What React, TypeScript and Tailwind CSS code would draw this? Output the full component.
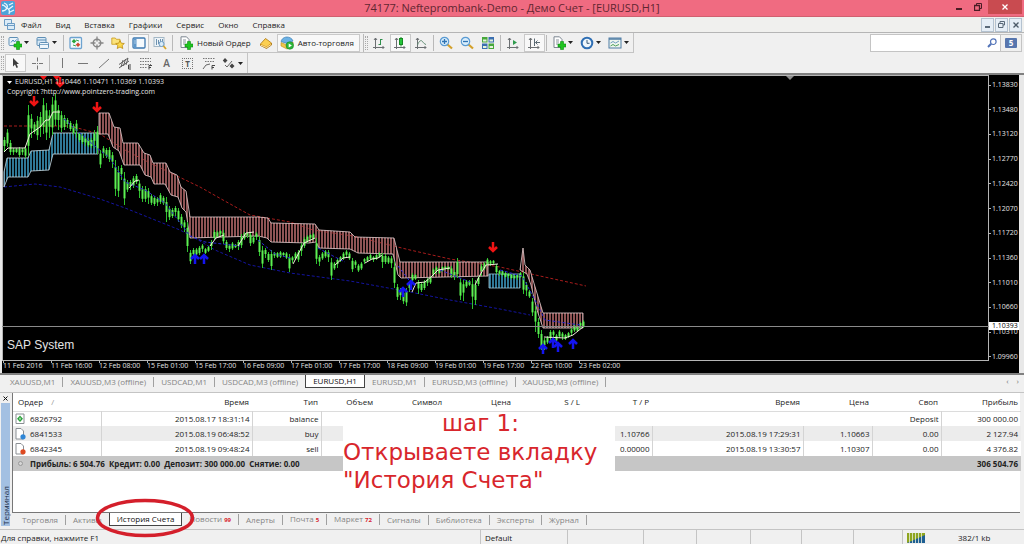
import type { ReactNode } from 'react';

const FONT = "font-['Open_Sans','Noto_Sans',sans-serif]";

/* ---------- icons ---------- */

const Icon = ({ children }: { children: ReactNode }) => (
  <svg viewBox="0 0 14 14" className="size-[14px] shrink-0" fill="none" strokeWidth="1">
    {children}
  </svg>
);

const Plus = () => (
  <path d="M8.500 5.500h3v2.500H14v3h-2.500v2.500h-3V11H6V8h2.500z" fill="#1fc41f" stroke="#0b8a12" strokeWidth=".6" />
);

const Axes = () => (
  <path d="M3.500 2v11M1 11.500h11M2 4l1.500-2L5 4M10.500 10l1.500 1.500-1.500 1.500" stroke="#6b6f72" />
);

const NewChartIcon = () => (
  <Icon>
    <rect x="1" y="1.500" width="9" height="8" rx="1" fill="#eaf4fb" stroke="#5f8fb5" />
    <path d="M3 6.500 5 4l1.500 2L8.500 3.500" stroke="#4b8ac0" />
    <Plus />
  </Icon>
);

const ProfilesIcon = () => (
  <Icon>
    <rect x="1" y="1.500" width="9" height="8" rx="1" fill="#d7e9f7" stroke="#5f8fb5" />
    <path d="M1 4h9" stroke="#5f8fb5" />
    <rect x="3.500" y="6.500" width="9" height="6" rx="1" fill="#eef6fc" stroke="#5f8fb5" />
    <path d="M4 8.500h8" stroke="#7fa9ca" />
  </Icon>
);

const MarketWatchIcon = () => (
  <Icon>
    <rect x="1" y="1.500" width="11.500" height="11" rx="1" fill="#f4f9fd" stroke="#6da3d0" strokeWidth="1.300" />
    <path d="m5 3 2.300 2.300L5 7.600 2.700 5.300z" fill="#28a43a" />
    <path d="m9 6.500 2.300 2.300L9 11.100 6.700 8.800z" fill="#d0452c" />
    <path d="M7 4l3 1M4 9l3 1" stroke="#39a652" />
  </Icon>
);

const CrosshairWindowIcon = () => (
  <Icon>
    <circle cx="7" cy="7" r="3.800" stroke="#868686" strokeWidth="1.400" />
    <path d="M7 .5v5M7 8.500v5M.5 7h5M8.500 7h5" stroke="#868686" strokeWidth="1.300" />
  </Icon>
);

const FolderStarIcon = () => (
  <Icon>
    <path d="M.8 2h3.500l1 1.300H9v5H.8z" fill="#fbe37b" stroke="#c89a1c" strokeWidth=".8" />
    <path d="m9 4.500 1.300 2.700 3 .3-2.200 2 .7 3L9 11l-2.800 1.500.7-3-2.200-2 3-.3z" fill="#fbd94b" stroke="#bd8b12" strokeWidth=".8" />
  </Icon>
);

const TerminalIcon = () => (
  <Icon>
    <rect x="1" y="2" width="12" height="10" rx="1" fill="#f6fafd" stroke="#3d78b0" strokeWidth="1.300" />
    <path d="M1.500 2.500h3v9h-3z" fill="#5d97ca" />
    <path d="M2.500 5h1M2.500 7h1" stroke="#fff" />
  </Icon>
);

const TesterIcon = () => (
  <Icon>
    <rect x="1" y="1.500" width="10" height="9" fill="#eef4f8" stroke="#a4b8c6" />
    <path d="M3.500 3v6M5.500 4v4M7.500 3v5M9.500 3v3" stroke="#6d92b0" />
    <circle cx="8.500" cy="8" r="2.500" fill="#d9ecf9" stroke="#6f9dc4" />
    <path d="m10.500 10 2.500 3" stroke="#d7a52b" strokeWidth="1.800" />
  </Icon>
);

const NewOrderIcon = () => (
  <Icon>
    <path d="M2 .8h5.500L10 3.500v8H2z" fill="#fff" stroke="#7c8690" />
    <path d="M4 4h3M4 6h3M4 8h2" stroke="#8a949c" />
    <Plus />
  </Icon>
);

const BookIcon = () => (
  <Icon>
    <path d="M1.500 8 6.500 2.500 12.500 7v2L7.500 12.500 1.500 9.500z" fill="#d99a22" stroke="#a87512" strokeWidth=".8" />
    <path d="M2 8 6.500 3 12 7 7.500 10.500z" fill="#fbcf52" />
    <path d="M2 9.300 7.500 11.500l4.500-3" stroke="#fff3c4" strokeWidth=".8" />
  </Icon>
);

const AutoTradeIcon = () => (
  <Icon>
    <path d="M1 6.500 7 9l6-3v4l-6 3-6-3z" fill="#f0c64c" stroke="#b98c1c" strokeWidth=".6" />
    <path d="M1 5.500C2 2 5 1 7 1s5 1 6 4L7 7.500z" fill="#6cb2e4" stroke="#3a7db5" strokeWidth=".7" />
    <circle cx="9.800" cy="9.500" r="3.800" fill="#2db53a" stroke="#128022" strokeWidth=".5" />
    <path d="m8.700 7.500 3.200 2-3.200 2z" fill="#fff" />
  </Icon>
);

const BarChartIcon = () => (
  <Icon>
    <Axes />
    <path d="M8.500 3v6M6.500 8.500h2M8.500 3.500h2" stroke="#2f8f4b" />
  </Icon>
);

const CandleChartIcon = () => (
  <Icon>
    <Axes />
    <path d="M8 1v9.500" stroke="#168a24" />
    <rect x="6.500" y="2.500" width="3" height="6" fill="#25c63a" stroke="#168a24" />
  </Icon>
);

const LineChartIcon = () => (
  <Icon>
    <Axes />
    <path d="M3.500 9C5 5 7 3.500 8.500 5.500S10.500 8 12 8.500" stroke="#5d8a70" />
  </Icon>
);

const ZoomIcon = ({ plus }: { plus?: boolean }) => (
  <Icon>
    <path d="m8.500 8.500 4.500 4" stroke="#d3a02b" strokeWidth="2.200" />
    <circle cx="5.500" cy="5.500" r="4.200" fill="#d8edfb" stroke="#5b9bd2" strokeWidth="1.200" />
    <path d={plus ? 'M3 5.500h5M5.500 3v5' : 'M3 5.500h5'} stroke="#2f74b5" strokeWidth="1.300" />
  </Icon>
);

const TileIcon = () => (
  <Icon>
    <path d="M1 1h5.500v5.500H1zM7.500 7.500H13V13H7.500z" fill="#47a83b" />
    <path d="M7.500 1H13v5.500H7.500zM1 7.500h5.500V13H1z" fill="#3b6fb0" />
    <path d="M2 3.500h3.500v2H2zM8.500 3.500H12v2H8.500zM2 10h3.500v2H2zM8.500 10H12v2H8.500z" fill="#e6f3dc" />
  </Icon>
);

const AutoScrollIcon = () => (
  <Icon>
    <Axes />
    <path d="m7 4 4 2.500L7 9z" fill="#2f9b4d" />
  </Icon>
);

const ShiftIcon = () => (
  <Icon>
    <Axes />
    <path d="M7.500 2.500V10M13 6.500H8.500M10.500 4.500l-2 2 2 2" stroke="#5c6b74" />
  </Icon>
);

const ClockIcon = () => (
  <Icon>
    <circle cx="7" cy="7" r="5.300" fill="#eef6fc" stroke="#2f6fb4" strokeWidth="2" />
    <path d="M7 4v3.300h2.500" stroke="#395a78" />
  </Icon>
);

const TemplateIcon = () => (
  <Icon>
    <rect x="1" y="2" width="12" height="10" fill="#eef6ee" stroke="#4f7da5" />
    <path d="M1 3h12" stroke="#4f7da5" strokeWidth="1.500" />
    <path d="M2.500 7 5 5.500 7.500 7 11 5" stroke="#6f9dc0" />
    <path d="M2.500 10 5 8.500 7.500 10 11 8.500" stroke="#4da05c" />
  </Icon>
);

const CursorIcon = () => (
  <Icon>
    <path d="M4 2v8.500l2-2 1.500 3.500 1.500-.7L7.600 8H10z" fill="#3e3e3e" />
  </Icon>
);

const CrossIcon = () => (
  <Icon>
    <path d="M7.500 1.500v4M7.500 9.500v4M2 7.500h4M9 7.500h4" stroke="#777" />
    <path d="M7 7.500h1" stroke="#777" />
  </Icon>
);

const StrokeIcon = ({ d }: { d: string }) => (
  <Icon>
    <path d={d} stroke="#777" />
  </Icon>
);

const ChannelIcon = () => (
  <Icon>
    <path d="M1 8.500 10 2M1 12 11 5M3 11l2-7M5.500 10l2-7M8 9l2-7" stroke="#606060" />
    <path d="M13 9h-2.500v4H13M10.500 11H13" stroke="#444" />
  </Icon>
);

const FiboIcon = () => (
  <Icon>
    <path d="M1 2.500h11M1 5.500h11M1 8.500h11M1 11.500h7" stroke="#777" strokeDasharray="1.500 1" />
    <path d="M10 13.500V9.500h3M10 11.500h2" stroke="#444" />
  </Icon>
);

const FiboFanIcon = () => (
  <Icon>
    <path d="M1 2.500h12M3 5.500h10" stroke="#777" strokeDasharray="1.500 1" />
    <path d="M1 13l3-4 4-1" stroke="#666" />
    <path d="M10 13.500V9.500h3M10 11.500h2" stroke="#444" />
  </Icon>
);

const ArrowsIcon = () => (
  <Icon>
    <path d="m3 2 2.500 2.500L3 7 .8 4.500zM10 7.500l2.500 2.500-2.500 2.500-2.500-2.500z" fill="#444" />
    <path d="m3 9 2 2 5-6" stroke="#666" />
  </Icon>
);

/* ---------- toolbar pieces ---------- */

type ToolProps = { label: string; pressed?: boolean; menu?: boolean; children: ReactNode };

const Tool = ({ label, pressed, menu, children }: ToolProps) => (
  <button
    aria-label={label}
    className={`flex h-[18px] shrink-0 items-center border ${menu ? 'w-[28px] gap-[2px] pl-[2px]' : 'w-[21px] justify-center'} ${
      pressed ? 'border-[#c9c9c9] bg-[#f8f8f8]' : 'border-transparent'
    }`}
  >
    {children}
    {menu && (
      <svg viewBox="0 0 5 3" className="h-[3px] w-[5px]">
        <path d="M0 0h5L2.500 3z" fill="#222" />
      </svg>
    )}
  </button>
);

const Divider = () => (
  <span className="flex w-[4px] shrink-0 justify-center">
    <span className="h-[16px] w-px bg-[#b9b9b9]" />
  </span>
);

const Grip = () => <span className="mx-px h-[14px] w-[3px] shrink-0 border-x border-dotted border-[#a9a9a9]" />;

const MENU = ['Файл', 'Вид', 'Вставка', 'Графики', 'Сервис', 'Окно', 'Справка'];

const TitleBar = () => (
  <header className="relative flex h-[17px] items-start justify-between border-b border-[#d0606f] bg-[#f06b81]">
    <svg viewBox="0 0 14 14" className="mt-px ml-px size-[14px]">
      <rect width="14" height="14" rx="2" fill="#4ea3d8" />
      <path d="M1 4c3 0 3 2 5 3s3 3 2 6M3 2c3 1 4 3 3 5s-3 3-5 3M8 4l4-2M8 8l4-3M9 11l4-2" stroke="#e9f6fd" strokeWidth="1.300" fill="none" />
    </svg>
    <h1 className="absolute inset-x-0 top-0 text-center text-[11px] leading-[15px] text-[#5f2630]">
      74177: Nefteprombank-Demo - Демо Счет - [EURUSD,H1]
    </h1>
    <div className="relative mr-[2px] flex h-[14px]">
      <button aria-label="Свернуть" className="flex w-[18px] items-end justify-center pb-[4px]">
        <span className="h-[2px] w-[6px] bg-[#4a1c24]" />
      </button>
      <button aria-label="Восстановить" className="flex w-[20px] items-center justify-center">
        <svg viewBox="0 0 8 8" className="size-[8px]" fill="none" stroke="#4a1c24">
          <path d="M2.500 2V.5h5v5H6" />
          <path d="M.5 2.500h5v5h-5z" strokeWidth="1.300" />
        </svg>
      </button>
      <button aria-label="Закрыть" className="flex w-[34px] items-center justify-center bg-[#c94b50]">
        <svg viewBox="0 0 6 6" className="size-[6px]">
          <path d="m.5.5 5 5M5.500.5l-5 5" stroke="#fff" strokeWidth="1.300" />
        </svg>
      </button>
    </div>
  </header>
);

const mdiButton = 'flex h-[14px] w-[13px] items-center justify-center border border-[#b4c2d0] bg-[#e6eef6]';

const MenuBar = () => (
  <nav className="flex h-[16px] items-center justify-between border-b border-[#b5b5b5] bg-[#f0f0ee] pr-[2px]">
    <div className="flex items-center">
      <svg viewBox="0 0 11 11" className="mr-[-1px] ml-[4px] size-[11px]" fill="#dcecf7" stroke="#6c9cc4">
        <path d="M.5.5h7v6h-7z" />
        <path d="M3.500 4.500h7v6h-7zM3.500 6.500h7" />
      </svg>
      {MENU.map((item) => (
        <button key={item} className="px-[7px] text-[8px] leading-[12px] text-[#222]">
          {item}
        </button>
      ))}
    </div>
    <div className="flex gap-px">
      <button aria-label="Свернуть окно" className={mdiButton}>
        <span className="mt-[4px] h-[2px] w-[5px] bg-[#5b6a79]" />
      </button>
      <button aria-label="Восстановить окно" className={mdiButton}>
        <svg viewBox="0 0 7 7" className="size-[7px]" fill="none" stroke="#5b6a79">
          <path d="M2 2V.5h4.500V4H5M.5 2.500H5v4H.5z" />
        </svg>
      </button>
      <button aria-label="Закрыть окно" className={mdiButton}>
        <svg viewBox="0 0 6 6" className="size-[6px]" stroke="#4d5b69" strokeWidth="1.300">
          <path d="m.5.5 5 5M5.500.5l-5 5" />
        </svg>
      </button>
    </div>
  </nav>
);

const MainToolbar = () => (
  <div className="flex h-[20px] items-center justify-between bg-[#f0f0f0] pr-[2px]">
    <div className="flex h-[20px] items-center border-r border-b border-[#c4c4c4]">
      <Grip />
      <Tool label="Новый график" menu><NewChartIcon /></Tool>
      <Tool label="Профили" menu><ProfilesIcon /></Tool>
      <Divider />
      <Tool label="Обзор рынка"><MarketWatchIcon /></Tool>
      <Tool label="Окно данных"><CrosshairWindowIcon /></Tool>
      <Tool label="Навигатор"><FolderStarIcon /></Tool>
      <Tool label="Терминал" pressed><TerminalIcon /></Tool>
      <Tool label="Тестер стратегий"><TesterIcon /></Tool>
      <Divider />
      <button className="flex h-[18px] shrink-0 items-center gap-[4px] px-[5px] text-[8px] text-[#222]">
        <NewOrderIcon />
        Новый Ордер
      </button>
      <Tool label="MetaEditor"><BookIcon /></Tool>
      <button className="mr-[3px] flex h-[18px] shrink-0 items-center gap-[4px] border border-[#c9c9c9] bg-[#f8f8f8] pr-[5px] pl-[2px] text-[8px] text-[#222]">
        <AutoTradeIcon />
        Авто-торговля
      </button>
      <span className="h-[18px] w-px bg-[#b9b9b9]" />
      <Grip />
      <Tool label="Бары"><BarChartIcon /></Tool>
      <Tool label="Японские свечи" pressed><CandleChartIcon /></Tool>
      <Tool label="Линия"><LineChartIcon /></Tool>
      <Divider />
      <Tool label="Увеличить"><ZoomIcon plus /></Tool>
      <Tool label="Уменьшить"><ZoomIcon /></Tool>
      <Tool label="Мозаика"><TileIcon /></Tool>
      <Divider />
      <Tool label="Автопрокрутка"><AutoScrollIcon /></Tool>
      <Tool label="Сдвиг графика" pressed><ShiftIcon /></Tool>
      <Divider />
      <Tool label="Индикаторы" menu><NewOrderIcon /></Tool>
      <Tool label="Периоды" menu><ClockIcon /></Tool>
      <Tool label="Шаблоны" menu><TemplateIcon /></Tool>
    </div>
    <div className="flex h-[18px] border border-[#c4c4c4]">
      <label className="flex w-[129px] items-center bg-white pr-[3px]">
        <input type="search" aria-label="Поиск" className="min-w-0 flex-1 px-1 text-[8px] outline-none" />
        <svg viewBox="0 0 10 10" className="size-[10px]" fill="none" stroke="#5273b8">
          <circle cx="6.300" cy="3.700" r="2.800" strokeWidth="1.200" />
          <path d="M4.200 5.800 1 9" strokeWidth="2" />
        </svg>
      </label>
      <button aria-label="Сообщения" className="flex w-[21px] items-center justify-center border-l border-[#c4c4c4]">
        <span className="rounded-[1px] bg-[#5776ae] px-[4px] text-[8px] leading-[10px] font-bold text-white">5</span>
      </button>
    </div>
  </div>
);

const LineToolbar = () => (
  <div className="flex h-[20px] bg-[#f0f0f0]">
    <div className="flex items-center border-r border-[#c4c4c4]">
      <Grip />
      <Tool label="Курсор" pressed><CursorIcon /></Tool>
      <Tool label="Перекрестие"><CrossIcon /></Tool>
      <Divider />
      <Tool label="Вертикальная линия"><StrokeIcon d="M7.500 2v10" /></Tool>
      <Tool label="Горизонтальная линия"><StrokeIcon d="M2 7.500h10" /></Tool>
      <Tool label="Трендовая линия"><StrokeIcon d="M2 12 12 3" /></Tool>
      <Tool label="Канал"><ChannelIcon /></Tool>
      <Tool label="Фибоначчи"><FiboIcon /></Tool>
      <Tool label="Текст"><span className="text-[10px] leading-none font-semibold text-[#666]">A</span></Tool>
      <Tool label="Метка">
        <span className="border border-dotted border-[#777] px-[2px] text-[8px] leading-[9px] font-bold text-[#555]">T</span>
      </Tool>
      <Tool label="Веер Фибоначчи"><FiboFanIcon /></Tool>
      <Tool label="Стрелки" menu><ArrowsIcon /></Tool>
    </div>
  </div>
);

/* ---------- chart ---------- */

// [high, low] of each hourly candle, 3 units apart
const CANDLES = [
  [137, 152], [129, 147], [140, 155], [148, 155], [148, 153], [147, 157], [148, 155], [146, 158], [105, 156], [114, 138],
  [122, 134], [116, 140], [112, 137], [98, 134], [103, 140], [110, 138], [97, 135], [94, 126], [105, 130], [111, 132],
  [115, 130], [118, 128], [121, 131], [124, 135], [120, 138], [132, 142], [134, 144], [137, 146], [138, 147], [138, 148],
  [130, 148], [126, 154], [150, 168], [146, 158], [148, 158], [147, 162], [152, 168], [160, 196], [166, 197], [165, 180],
  [172, 205], [180, 192], [180, 190], [176, 188], [174, 184], [180, 198], [186, 202], [186, 202], [188, 204], [194, 205],
  [196, 206], [197, 206], [193, 204], [196, 205], [197, 222], [206, 220], [208, 218], [206, 216], [208, 222], [214, 228],
  [220, 232], [222, 252], [250, 264], [248, 258], [248, 256], [246, 255], [244, 252], [248, 254], [246, 252], [240, 250],
  [230, 240], [231, 238], [230, 236], [230, 244], [240, 250], [244, 252], [242, 250], [244, 248], [240, 250], [234, 248],
  [232, 240], [232, 238], [232, 246], [236, 244], [232, 240], [236, 256], [246, 268], [248, 258], [252, 262], [250, 270],
  [252, 258], [252, 258], [251, 258], [252, 257], [252, 259], [254, 272], [256, 263], [252, 260], [250, 262], [243, 256],
  [237, 248], [235, 243], [234, 240], [233, 240], [238, 264], [255, 266], [252, 260], [250, 258], [250, 262], [258, 280],
  [262, 270], [258, 268], [256, 262], [252, 260], [250, 258], [252, 260], [258, 272], [260, 268], [264, 272], [262, 270],
  [258, 264], [256, 262], [254, 260], [256, 262], [254, 260], [252, 258], [253, 268], [254, 264], [256, 264], [256, 268],
  [262, 288], [284, 300], [288, 300], [290, 304], [288, 306], [282, 292], [273, 282], [274, 280], [280, 294], [282, 292],
  [280, 290], [278, 286], [276, 284], [268, 276], [266, 274], [268, 274], [266, 272], [266, 270], [266, 270], [266, 278],
  [270, 280], [258, 278], [278, 300], [280, 301], [280, 288], [280, 286], [278, 309], [280, 305], [276, 286], [264, 276],
  [262, 270], [258, 266], [260, 266], [260, 264], [264, 274], [270, 276], [270, 276], [272, 278], [273, 278], [274, 279],
  [275, 279], [274, 280], [272, 278], [272, 294], [282, 296], [290, 298], [298, 316], [306, 332], [318, 338], [330, 350],
  [338, 350], [336, 344], [330, 340], [330, 338], [334, 342], [330, 338], [332, 340], [334, 340], [332, 338], [328, 336],
  [324, 332], [326, 332], [322, 328], [320, 328],
];

const BANDS = [
  { color: '#2f7896', edge: '#c9dde6', d: 'M4 172 7 158H28L31 151 49 150 53 133H98V154H53L49 170 31 171 28 177H8L4 187z' },
  {
    color: '#8f5455',
    edge: '#e6cfd0',
    d: 'M99 113h10l5 14 6 1 3 15h15l6 10 6 2 3 8h13l4 9 7 3 4 12 5 4 4 26h68l10 1 3 5 44 1 4 6 31 2 5 5 39 1 6 24h88v14l-87 2-3-3-5-21-35-1-8-4-31-1-3-6-7 1-38-1-4-4-9-2-68 2-4-26-4-4-4-11-7-2-6-11h-11l-3-7-6-2-5-10h-16l-5-14-6-4-5-13h-9z',
  },
  { color: '#2f7896', edge: '#9cc6d8', d: 'M489 274h31v14h-31z' },
  { color: '#8f5455', edge: '#e6cfd0', d: 'M520 270 523 248 525 265 530 270 536 290 543 313H583V328H543L537 310 531 285 527 274z' },
];

const AVERAGES = [
  'M4 152 8 148H25L30 134 40 127 46 120H49L53 112H60',
  'M129 188 135 181 139 180',
  'M210 246 216 238 224 235',
  'M238 246 246 233 254 232',
  'M293 264 304 243 315 238',
  'M335 265 343 258 350 257',
  'M365 263 372 259 378 258 382 255',
  'M412 292 416 283 425 282 432 276 438 270 450 268',
  'M475 285 480 275 486 265 498 264',
  'M544 337 565 338 573 335 583 327',
];

const SELL_ARROWS = [[34, 101], [60, 82], [97, 107], [493, 247]];
const BUY_ARROWS = [[195, 259], [204, 259], [403, 292], [411, 285], [543, 349], [553, 343], [558, 347], [573, 344]];

const PriceChart = () => (
  <svg viewBox="3 76 984 284" preserveAspectRatio="xMinYMin meet" className="block h-[284px] w-full" fill="none">
    <defs>
      {BANDS.map((band, i) => (
        <pattern key={i} id={`band${i}`} width="3" height="10" patternUnits="userSpaceOnUse">
          <path d="M1 0v10" stroke={band.color} strokeWidth="2" />
        </pattern>
      ))}
    </defs>
    <path
      d="M4 126H70L100 134 125 150 150 163 200 187 223 200 250 215 290 222 313 230 353 236 410 250 450 259 500 267 540 276 586 286"
      stroke="#a81c1c"
      strokeDasharray="3 2"
    />
    <path
      d="M4 187 35 184 60 187 100 199 125 208 150 218 180 230 195 238 215 250 250 265 290 273 350 281 410 292 450 300 500 309 530 315"
      stroke="#1414a0"
      strokeDasharray="3 2"
    />
    {BANDS.map((band, i) => (
      <path key={i} d={band.d} fill={`url(#band${i})`} stroke={band.edge} strokeWidth=".8" />
    ))}
    {CANDLES.map(([high, low], i) => {
      const x = 4 + i * 3;
      const size = low - high;
      return (
        <g key={i}>
          <path d={`M${x + 0.5} ${high}V${low}`} stroke="#2fc02f" />
          <rect x={x - 0.5} y={high + size * 0.2} width="2" height={size * (i % 3 ? 0.6 : 0.4)} fill="#5cf052" />
        </g>
      );
    })}
    <path
      d="M64 119 80 133 97 148 110 158 125 182 145 190 165 203 190 236 205 242 240 246M258 240 275 254 290 258M318 248 333 256 345 262M398 266 412 284M440 270 470 282M500 270 522 276 535 300 545 320 580 325"
      stroke="#2727d0"
      strokeDasharray="3 2"
    />
    {AVERAGES.map((d) => (
      <path key={d} d={d} stroke="#f1efdc" />
    ))}
    <path d="M40 76h7l-3.500 4zM53 76h7l-3.500 4z" fill="#f01414" />
    {SELL_ARROWS.map(([x, y]) => (
      <path key={x} d={`M${x} ${y - 5}v9M${x - 4} ${y}l4 4 4-4`} stroke="#f01414" strokeWidth="2.500" />
    ))}
    {BUY_ARROWS.map(([x, y]) => (
      <path key={x} d={`M${x} ${y + 5}v-9M${x - 4} ${y}l4-4 4 4`} stroke="#1414f0" strokeWidth="2.500" />
    ))}
    <path d="M786 76h8l-4 4z" fill="#8c8c8c" />
  </svg>
);

const PRICES = [
  '1.13830', '1.13480', '1.13120', '1.12770', '1.12420', '1.12070', '1.11720', '1.11360', '1.11010', '1.10660', '1.10310', '1.09960',
];

const TIMES = [
  '11 Feb 2016', '11 Feb 16:00', '12 Feb 08:00', '15 Feb 01:00', '15 Feb 17:00', '16 Feb 09:00', '17 Feb 01:00',
  '17 Feb 17:00', '18 Feb 09:00', '19 Feb 01:00', '19 Feb 17:00', '22 Feb 10:00', '23 Feb 02:00',
];

const ChartWindow = () => (
  <section className="flex border-t-2 border-b-2 border-[#808080] bg-[#e8e8e8] pr-[5px] pl-[2px]">
    <div className="min-w-0 flex-1 bg-black text-[7px] leading-[8px] text-[#e4e4e4]">
      <div className="relative flex">
        <div className="relative min-w-0 flex-1 overflow-hidden border border-[#b5b5b5]">
          <PriceChart />
          <div className="absolute top-[2px] left-[4px] flex flex-col gap-[2px]">
            <p className="flex items-center gap-[3px]">
              <svg viewBox="0 0 5 3" className="h-[3px] w-[5px]">
                <path d="M0 0h5L2.500 3z" fill="#fff" />
              </svg>
              EURUSD,H1 1.10446 1.10471 1.10369 1.10393
            </p>
            <p>Copyright ?http://www.pointzero-trading.com</p>
          </div>
          <p className="absolute bottom-[8px] left-[4px] font-['Liberation_Sans',Arial,sans-serif] text-[12px] leading-[14px]">
            SAP System
          </p>
        </div>
        <ol className="flex w-[30px] flex-col justify-between pt-[6px]">
          {PRICES.map((price) => (
            <li key={price} className="flex items-center gap-px">
              <span className="h-px w-[2px] bg-[#b5b5b5]" />
              {price}
            </li>
          ))}
        </ol>
        <div className="absolute inset-x-0 top-[247px] flex items-center">
          <span className="h-px flex-1 bg-[#8a8a8a]" />
          <span className="w-[30px] bg-white pl-[3px] text-black">1.10393</span>
        </div>
      </div>
      <ol className="flex h-[12px] overflow-hidden pl-px">
        {TIMES.map((time) => (
          <li
            key={time}
            className="relative w-[48px] shrink-0 pt-px whitespace-nowrap before:absolute before:top-0 before:left-0 before:h-[2px] before:w-px before:bg-[#b5b5b5]"
          >
            {time}
          </li>
        ))}
      </ol>
    </div>
  </section>
);

/* ---------- tabs ---------- */

type TabItem = { label: string; count?: number; active?: boolean };

const Tabs = ({ items }: { items: TabItem[] }) => (
  <div role="tablist" className="flex items-start pl-[3px]">
    {items.map(({ label, count, active }, i) => {
      const nextActive = items[i + 1]?.active;
      return (
        <button
          key={i}
          role="tab"
          aria-selected={!!active}
          className={`flex h-[13px] items-center ${active ? 'border-x border-b border-[#444] bg-white text-[#111]' : 'text-[#858585]'}`}
        >
          <span className={`px-[7px] text-[8px] leading-[10px] whitespace-nowrap ${active || nextActive ? '' : 'border-r border-[#a0a0a0]'}`}>
            {label}
            {count && <b className="pl-[2px] text-[6px] text-[#d8232e]">{count}</b>}
          </span>
        </button>
      );
    })}
  </div>
);

const CHART_TABS: TabItem[] = [
  { label: 'XAUUSD,M1' },
  { label: 'XAUUSD,M3 (offline)' },
  { label: 'USDCAD,M1' },
  { label: 'USDCAD,M3 (offline)' },
  { label: 'EURUSD,H1', active: true },
  { label: 'EURUSD,M1' },
  { label: 'EURUSD,M3 (offline)' },
  { label: 'XAUUSD,M3 (offline)' },
];

const TERMINAL_TABS: TabItem[] = [
  { label: 'Торговля' },
  { label: 'Активы' },
  { label: 'История Счета', active: true },
  { label: 'Новости', count: 99 },
  { label: 'Алерты' },
  { label: 'Почта', count: 5 },
  { label: 'Маркет', count: 72 },
  { label: 'Сигналы' },
  { label: 'Библиотека' },
  { label: 'Эксперты' },
  { label: 'Журнал' },
];

/* ---------- terminal ---------- */

const HEADERS = ['Время', 'Тип', 'Объем', 'Символ', 'Цена', 'S / L', 'T / P', 'Время', 'Цена', 'Своп', 'Прибыль'];

const ORDERS = [
  {
    id: '6841533',
    color: '#2f86d6',
    cells: ['2015.08.19 06:48:52', 'buy', '', '', '', '', '1.10766', '2015.08.19 17:29:31', '1.10663', '0.00', '2 127.94'],
  },
  {
    id: '6842345',
    color: '#dd4a22',
    cells: ['2015.08.19 09:48:24', 'sell', '', '', '', '', '0.00000', '2015.08.19 13:30:57', '1.10307', '0.00', '4 376.82'],
  },
];

const cell = 'border-r border-[#d4d4d4] pr-[2px] text-right last:border-r-0 last:pr-[3px]';

const OrderIcon = ({ color }: { color: string }) => (
  <svg viewBox="0 0 11 12" className="h-[12px] w-[11px]">
    <path d="M1 .5h5L8.500 3v8H1z" fill="#fff" stroke="#8a8f94" />
    <circle cx="8" cy="8.800" r="2.600" fill={color} />
  </svg>
);

const History = () => (
  <table className="w-full table-fixed border-collapse text-[8px] leading-[10px] whitespace-nowrap text-[#222]">
    <colgroup>
      <col className="w-[88px]" />
      <col className="w-[151px]" />
      <col className="w-[69px]" />
      <col className="w-[55px]" />
      <col className="w-[69px]" />
      <col className="w-[69px]" />
      <col className="w-[69px]" />
      <col className="w-[69px]" />
      <col className="w-[151px]" />
      <col className="w-[69px]" />
      <col className="w-[69px]" />
      <col className="w-[80px]" />
    </colgroup>
    <thead>
      <tr className="h-[18px] border-b border-[#dcdcdc]">
        <th className="pl-[5px] text-left font-normal">
          Ордер <span className="pl-[6px] text-[#999]">/</span>
        </th>
        {HEADERS.map((header, i) => (
          <th key={i} className="pr-[3px] text-right font-normal">
            {header}
          </th>
        ))}
      </tr>
    </thead>
    <tbody>
      <tr className="h-[15px]">
        <td className="border-r border-[#d4d4d4] pl-[2px]">
          <span className="flex items-center gap-[4px]">
            <svg viewBox="0 0 11 12" className="h-[12px] w-[11px]">
              <path d="M1 1h8v9.500H1z" fill="#fff" stroke="#8a8f94" />
              <path d="M5 2.500 8 5.700 5 8.900 2 5.700z" fill="#2ca33c" />
              <path d="M5 4.700v2" stroke="#fff" />
            </svg>
            6826792
          </span>
        </td>
        <td className={cell}>2015.08.17 18:31:14</td>
        <td className={cell}>balance</td>
        <td className={cell} colSpan={8}>Deposit</td>
        <td className={cell}>300 000.00</td>
      </tr>
      {ORDERS.map((order) => (
        <tr key={order.id} className="h-[15px] odd:bg-white even:bg-[#ececec]">
          <td className="border-r border-[#d4d4d4] pl-[2px]">
            <span className="flex items-center gap-[4px]">
              <OrderIcon color={order.color} />
              {order.id}
            </span>
          </td>
          {order.cells.map((value, i) => (
            <td key={i} className={cell}>
              {value}
            </td>
          ))}
        </tr>
      ))}
    </tbody>
    <tfoot>
      <tr className="h-[15px] bg-[#c6c6c6] font-bold">
        <td colSpan={11} className="pl-[5px]">
          <span className="flex items-center gap-[7px]">
            <span className="size-[5px] rounded-full border border-[#999] bg-[#d6d6d6]" />
            <span className="whitespace-pre">Прибыль: 6 504.76  Кредит: 0.00  Депозит: 300 000.00  Снятие: 0.00</span>
          </span>
        </td>
        <td className="pr-[3px] text-right">306 504.76</td>
      </tr>
    </tfoot>
  </table>
);

const Terminal = () => (
  <section className="relative flex min-h-[135px] flex-1 border-t border-[#c4c4c4] pb-[3px]">
    <div className="flex w-[12px] flex-col items-center pr-[2px] pl-px">
      <button aria-label="Закрыть терминал" className="flex h-[10px] items-center">
        <svg viewBox="0 0 5 5" className="size-[5px]" stroke="#111">
          <path d="m.5.5 4 4M4.500.5l-4 4" />
        </svg>
      </button>
      <div className="flex w-full flex-1 items-center bg-[#a3c0e2] pt-px [writing-mode:vertical-rl] rotate-180">
        <span className="text-[8px] leading-[9px] text-[#1c2c44]">Терминал</span>
      </div>
    </div>
    <div className="flex min-w-0 flex-1 flex-col pr-[4px]">
      <div className="flex-1 border-b border-l border-[#777] bg-white">
        <History />
      </div>
      <Tabs items={TERMINAL_TABS} />
    </div>
    <div className="absolute top-[20px] left-[343px] w-[272px] bg-white text-[23px] leading-[28px] whitespace-nowrap text-[#d8262c] font-['DejaVu_Sans',Verdana,sans-serif]">
      <p className="pb-[5px] pl-[99px] leading-[20px]">шаг 1:</p>
      <p>Открываете вкладку</p>
      <p>"История Счета"</p>
    </div>
    <svg viewBox="0 0 100 40" className="absolute bottom-[-9px] left-[95px] h-[40px] w-[100px]" fill="none">
      <ellipse cx="50" cy="20" rx="47.500" ry="17.500" stroke="#d41f2b" strokeWidth="3.500" />
    </svg>
  </section>
);

const TrafficIcon = () => (
  <svg viewBox="0 0 18 10" className="h-[10px] w-[18px]">
    <path d="M0 0h18v6L0 10z" fill="#8fa51f" />
    <path d="M0 10 18 2v8z" fill="#1e5f93" />
    <path d="M2.500 0v10M5.500 0v10M8.500 0v10M11.500 0v10M14.500 0v10" stroke="#e9efdf" strokeWidth=".8" />
  </svg>
);

const pane = 'h-[14px] shrink-0 border-l border-[#c4c4c4] pt-px';

const StatusBar = () => (
  <footer className="flex h-[15px] items-center border-t border-[#c4c4c4] text-[8px] leading-[14px] text-[#222]">
    <span className="flex-1 pt-px pl-px">Для справки, нажмите F1</span>
    <span className={`${pane} w-[87px] pl-[4px]`}>Default</span>
    <span className={`${pane} w-[76px]`} />
    <span className={`${pane} w-[53px]`} />
    <span className={`${pane} w-[54px]`} />
    <span className={`${pane} w-[51px]`} />
    <span className={`${pane} w-[52px]`} />
    <span className={`${pane} w-[49px]`} />
    <span className={`${pane} flex w-[122px] items-center gap-[33px] pl-[4px]`}>
      <TrafficIcon />
      382/1 kb
    </span>
  </footer>
);

const App = () => {
  return (
    <main className={`flex min-h-screen flex-col bg-[#f0f0f0] ${FONT}`}>
      <TitleBar />
      <MenuBar />
      <MainToolbar />
      <LineToolbar />
      <ChartWindow />
      <div className="flex h-[17px] items-start justify-between pr-[5px]">
        <Tabs items={CHART_TABS} />
        <div className="flex gap-[8px] text-[8px] leading-[12px] text-[#777]">
          <button aria-label="Назад">‹</button>
          <button aria-label="Вперед">›</button>
        </div>
      </div>
      <Terminal />
      <StatusBar />
    </main>
  );
};

export default App;
